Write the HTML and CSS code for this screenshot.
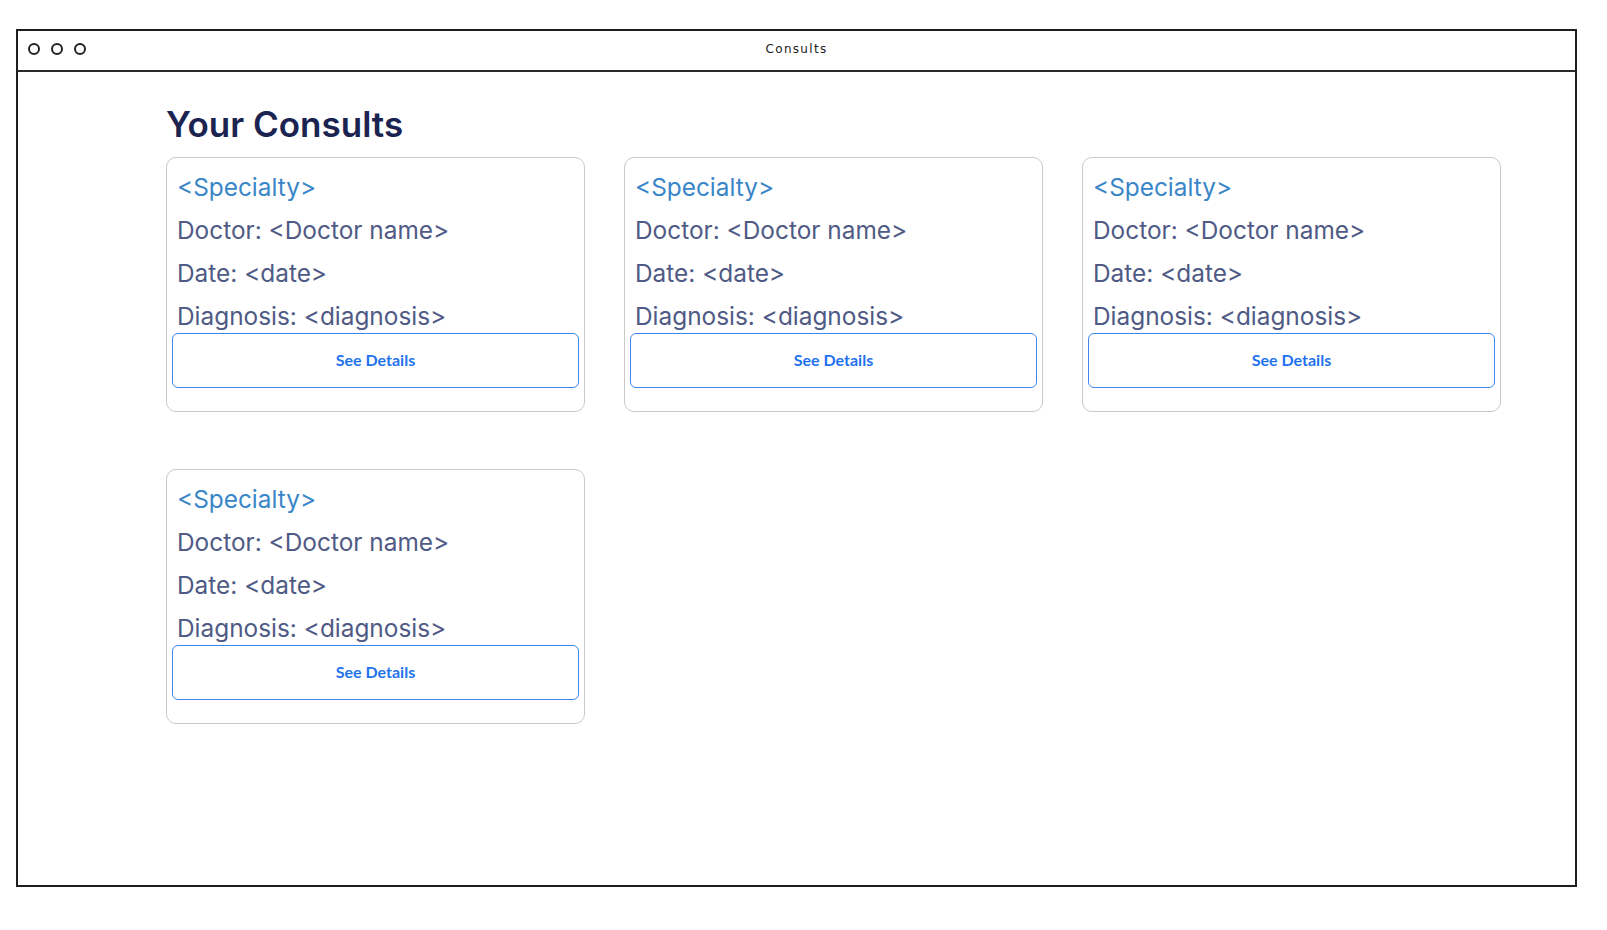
FILE: index.html
```html
<!DOCTYPE html>
<html lang="en">
<head>
<meta charset="utf-8">
<title>Consults</title>
<link rel="stylesheet" href="styles.css">
</head>
<body>
<div class="window">
  <div class="titlebar">
    <div class="dots"><span class="dot"></span><span class="dot"></span><span class="dot"></span></div>
    <div class="title">Consults</div>
    <div></div>
  </div>
  <main class="content">
    <h1 class="heading">Your Consults</h1>
    <div class="grid">
      <div class="card">
        <div class="lines">
          <div class="specialty">&lt;Specialty&gt;</div>
          <div class="line">Doctor: &lt;Doctor name&gt;</div>
          <div class="line">Date: &lt;date&gt;</div>
          <div class="line">Diagnosis: &lt;diagnosis&gt;</div>
        </div>
        <button class="btn">See Details</button>
      </div>
      <div class="card">
        <div class="lines">
          <div class="specialty">&lt;Specialty&gt;</div>
          <div class="line">Doctor: &lt;Doctor name&gt;</div>
          <div class="line">Date: &lt;date&gt;</div>
          <div class="line">Diagnosis: &lt;diagnosis&gt;</div>
        </div>
        <button class="btn">See Details</button>
      </div>
      <div class="card">
        <div class="lines">
          <div class="specialty">&lt;Specialty&gt;</div>
          <div class="line">Doctor: &lt;Doctor name&gt;</div>
          <div class="line">Date: &lt;date&gt;</div>
          <div class="line">Diagnosis: &lt;diagnosis&gt;</div>
        </div>
        <button class="btn">See Details</button>
      </div>
      <div class="card">
        <div class="lines">
          <div class="specialty">&lt;Specialty&gt;</div>
          <div class="line">Doctor: &lt;Doctor name&gt;</div>
          <div class="line">Date: &lt;date&gt;</div>
          <div class="line">Diagnosis: &lt;diagnosis&gt;</div>
        </div>
        <button class="btn">See Details</button>
      </div>
    </div>
  </main>
</div>
</body>
</html>
```

FILE: styles.css
```css
* { box-sizing: border-box; }

html, body {
  margin: 0;
  padding: 0;
  background: #ffffff;
}

body {
  padding: 29px 0 0 16px;
  font-family: Inter, "Liberation Sans", sans-serif;
}

.window {
  width: 1561px;
  height: 858px;
  border: 2px solid #1e1e1e;
  background: #fff;
  display: flex;
  flex-direction: column;
}

.titlebar {
  height: 41px;
  border-bottom: 2px solid #2a2a2a;
  display: grid;
  grid-template-columns: 1fr auto 1fr;
  align-items: center;
  padding: 0 10px 3px 10px;
  flex: none;
}

.dots {
  display: flex;
  gap: 11px;
  align-items: center;
}

.dot {
  width: 12px;
  height: 12px;
  border: 2px solid #222;
  border-radius: 50%;
}

.title {
  font-family: "DejaVu Sans", sans-serif;
  font-size: 12px;
  letter-spacing: 1.3px;
  color: #222;
}

.content {
  padding: 30px 0 0 148px;
}

.heading {
  margin: 0 0 11px 0;
  font-family: Inter, sans-serif;
  font-weight: 600;
  font-size: 35px;
  line-height: 44px;
  color: #1b2451;
}

.grid {
  display: grid;
  grid-template-columns: repeat(3, 419px);
  column-gap: 39px;
  row-gap: 57px;
}

.card {
  border: 1px solid #c9c9c9;
  border-radius: 10px;
  padding: 15px 5px 23px 5px;
  display: flex;
  flex-direction: column;
}

.lines {
  display: flex;
  flex-direction: column;
  gap: 14px;
  padding-left: 5px;
}

.specialty,
.line {
  font-family: Inter, sans-serif;
  font-size: 24.4px;
  line-height: 29px;
  white-space: nowrap;
}

.specialty { color: #3a86c8; }
.line { color: #4f5a85; }

.btn {
  margin-top: 2px;
  height: 55px;
  width: 100%;
  padding: 0 0 2px 0;
  border: 1px solid #3f86ef;
  border-radius: 6px;
  background: #fff;
  font-family: Lato, "Liberation Sans", sans-serif;
  font-weight: 700;
  font-size: 16px;
  color: #1f72ee;
  cursor: pointer;
}
```
